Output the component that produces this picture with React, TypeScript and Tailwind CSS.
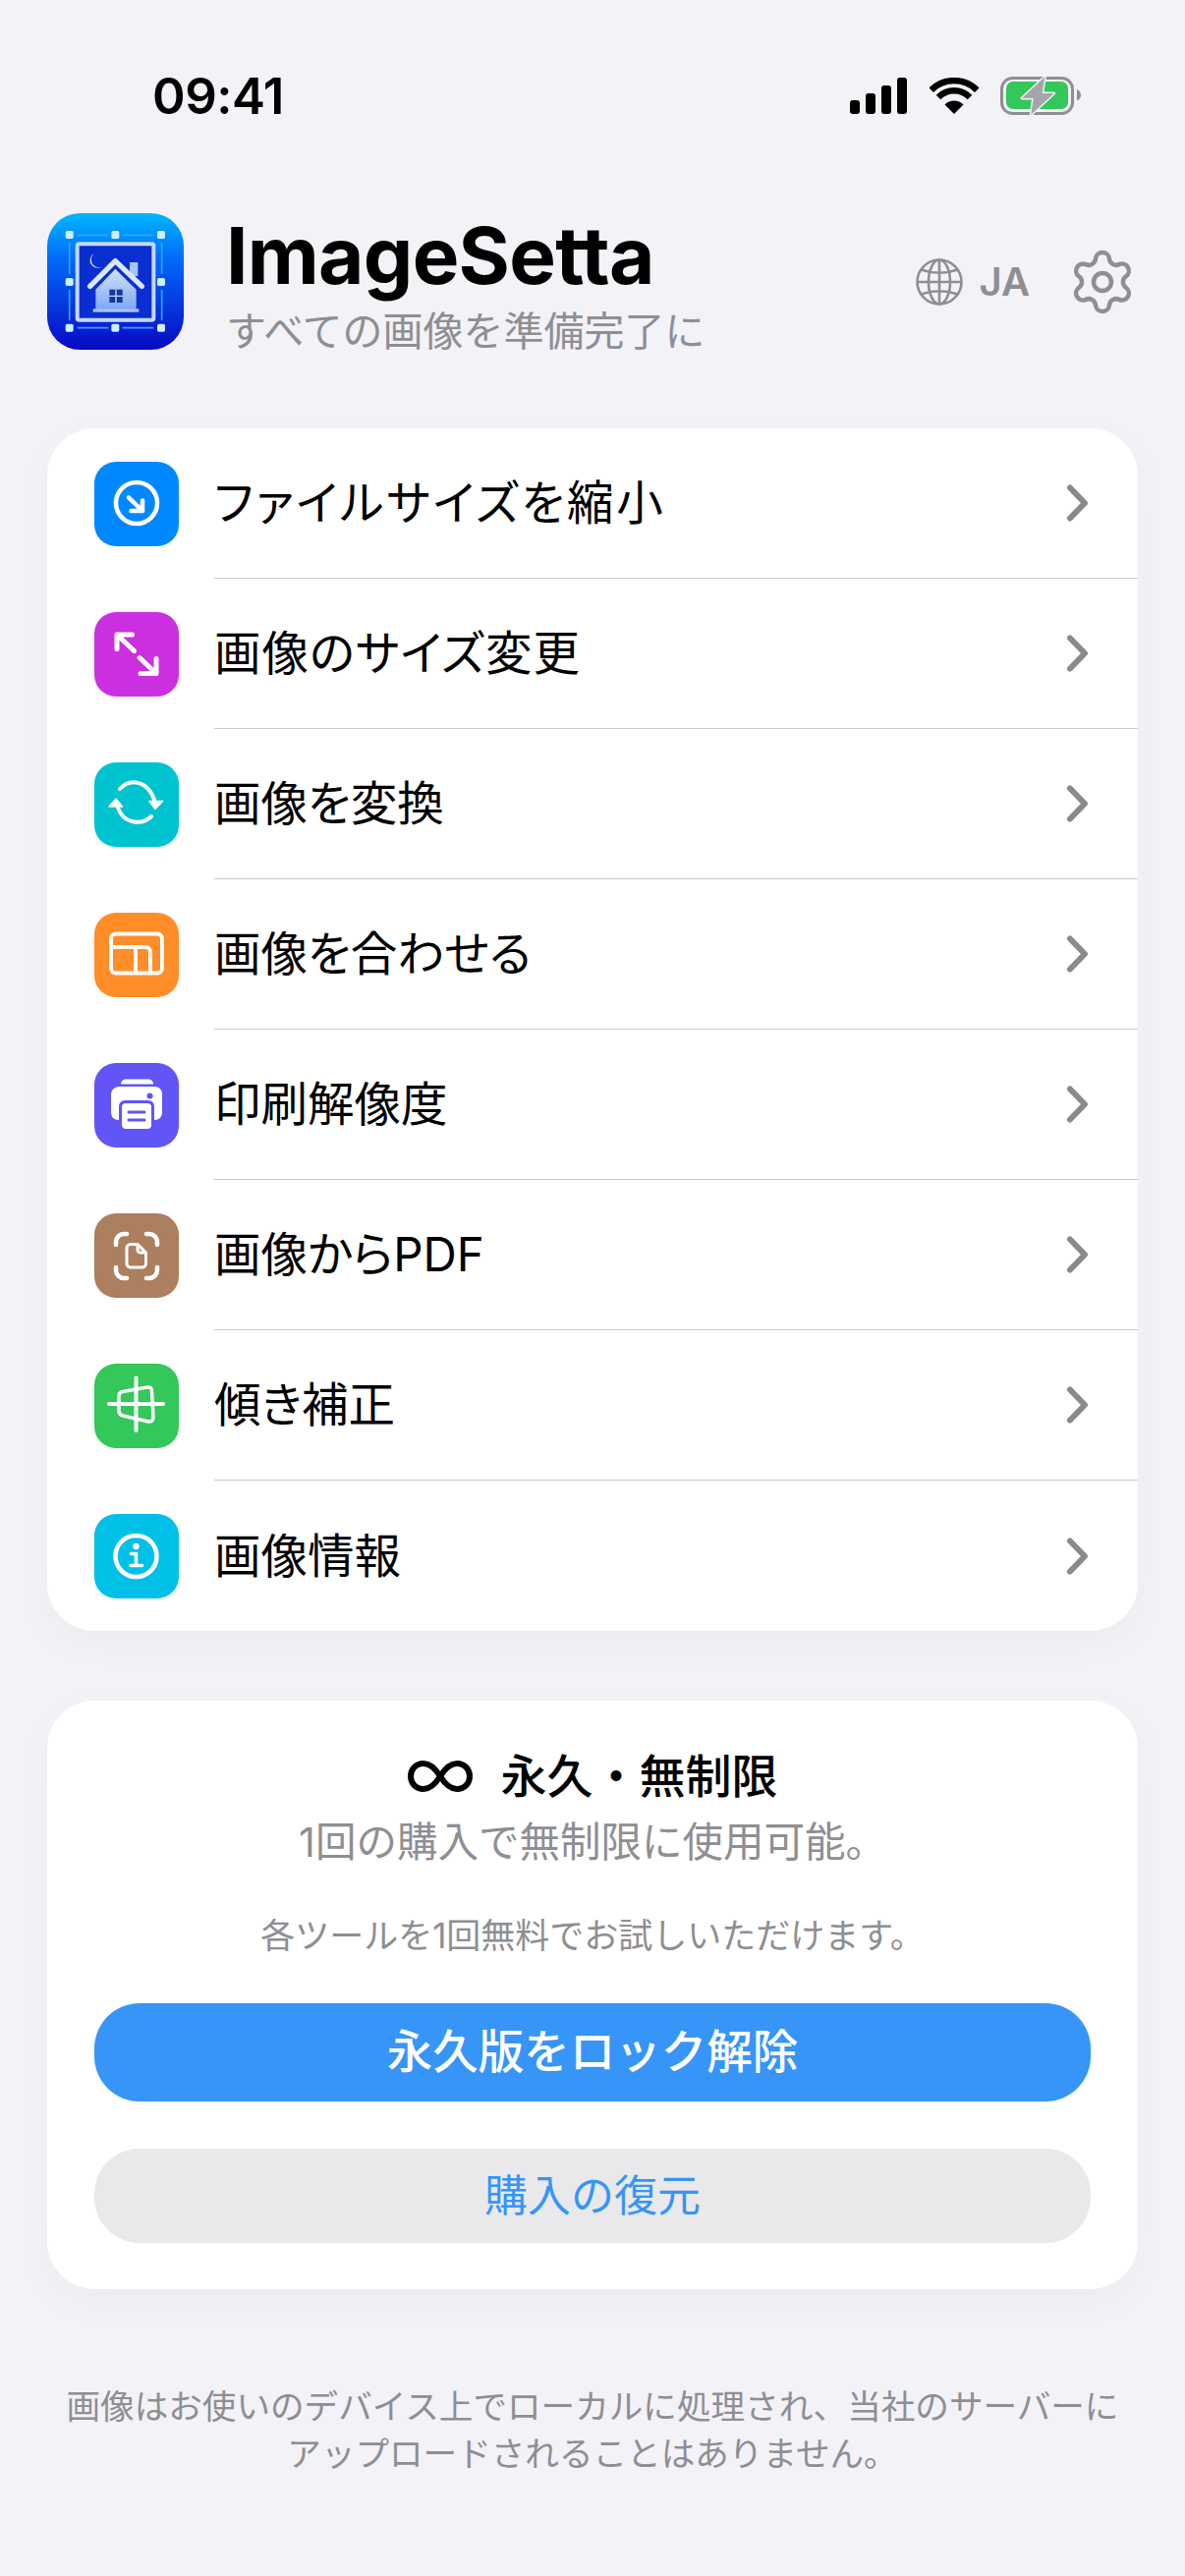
import type { ReactNode } from "react";
import { Settings } from "lucide-react";

function StatusIcons() {
  return (
    <div className="flex items-center">
      {/* signal */}
      <svg width="58" height="37" viewBox="0 0 58 37" fill="#000">
        <rect x="0" y="23" width="10" height="14" rx="3" />
        <rect x="16" y="16" width="10" height="21" rx="3" />
        <rect x="32" y="8" width="10" height="29" rx="3" />
        <rect x="48" y="0" width="10" height="37" rx="3" />
      </svg>
      {/* wifi */}
      <svg className="ml-[23px]" width="50" height="37" viewBox="0 0 50 37" fill="none" stroke="#000" strokeWidth="6.5">
        <path d="M1.7 12.7A33 33 0 0 1 48.3 12.7" />
        <path d="M9 20A22.6 22.6 0 0 1 41 20" />
        <path d="M25 37L15.5 27.5A13.4 13.4 0 0 1 34.5 27.5Z" fill="#000" stroke="none" />
      </svg>
      {/* battery */}
      <svg className="ml-[22px]" width="82" height="39" viewBox="0 0 82 39" fill="none">
        <rect x="1.5" y="1.5" width="72" height="36" rx="11" stroke="#8e8e93" strokeWidth="3" />
        <rect x="6" y="5" width="63" height="28" rx="7" fill="#34c759" />
        <path d="M78 13c2.500 1 4 3 4 5.800s-1.500 4.800-4 5.800z" fill="#8e8e93" />
        <path d="M45.300 0.300L22 22H33.700L31.300 38.700L54.700 17H42.700Z" fill="#a5a5aa" stroke="#f2f2f7" strokeWidth="3" strokeLinejoin="round" paintOrder="stroke" />
      </svg>
    </div>
  );
}

function AppIcon() {
  const xs = [123, 263, 403];
  const ys = [118, 262, 402];
  return (
    <svg className="shrink-0" width="139" height="139" viewBox="55 52 417 417">
      <defs>
        <linearGradient id="appBg" x1="0" y1="0" x2="0" y2="1">
          <stop offset="0" stopColor="#00b6ff" />
          <stop offset="0.35" stopColor="#0068f8" />
          <stop offset="1" stopColor="#0a08c4" />
        </linearGradient>
        <linearGradient id="appHouse" x1="0" y1="0" x2="0" y2="1">
          <stop offset="0" stopColor="#d2e2ff" />
          <stop offset="1" stopColor="#7fa8f2" />
        </linearGradient>
      </defs>
      <rect x="55" y="52" width="417" height="417" rx="100" fill="url(#appBg)" />
      <g stroke="#3aa0ff" strokeWidth="5">
        <path d="M147 119H242M285 119H380M147 402H242M285 402H380M123 142V238M123 286V380M405 142V238M405 286V380" />
      </g>
      {xs.flatMap((x) =>
        ys.map((y) =>
          x === 263 && y === 262 ? null : (
            <rect key={`${x}-${y}`} x={x - 12} y={y - 12} width="24" height="24" rx="5" fill="#cdeeff" />
          ),
        ),
      )}
      <rect x="147" y="146" width="233" height="232" rx="6" fill="#0a2ed2" stroke="#c2d8ff" strokeWidth="12" />
      <path d="M198 176A22 22 0 1 0 219 216A23 23 0 0 1 198 176Z" fill="#d4ecff" />
      <rect x="307" y="202" width="25" height="42" fill="#a9c6fb" />
      <path d="M203 285H327V345H203Z M263 222L327 285H203Z" fill="url(#appHouse)" />
      <rect x="195" y="344" width="140" height="10" fill="#a9c4f8" />
      <path d="M186 275L263 198L344 275" fill="none" stroke="#d8e6ff" strokeWidth="16" strokeLinecap="round" strokeLinejoin="round" />
      <rect x="245" y="285" width="40" height="40" fill="#10389e" />
      <path d="M265 285V325M245 305H285" stroke="#c8dcff" strokeWidth="4" />
    </svg>
  );
}

function IconBox({ color, children }: { color: string; children: ReactNode }) {
  return (
    <div className={`w-[86px] h-[86px] shrink-0 rounded-[22px] ${color}`}>
      <svg width="86" height="86" viewBox="0 0 86 86" fill="none" stroke="#fff" strokeLinecap="round" strokeLinejoin="round">
        {children}
      </svg>
    </div>
  );
}

const tools = [
  {
    label: "ファイルサイズを縮小",
    color: "bg-[#0088ff]",
    tracking: "tracking-[2.7px]",
    icon: (
      <g strokeWidth="4.500">
        <circle cx="43" cy="42" r="21" />
        <path d="M35 36.500L49 50M49 39.500V50H37.500" />
      </g>
    ),
  },
  {
    label: "画像のサイズ変更",
    color: "bg-[#cb30e0]",
    tracking: "tracking-[1px]",
    icon: (
      <g strokeWidth="5">
        <path d="M23 23L40.500 39.500M23 37.500V23H38.500" />
        <path d="M63 62.500L46 46.500M63 47.500V62.500H47" />
      </g>
    ),
  },
  {
    label: "画像を変換",
    color: "bg-[#00c3d0]",
    tracking: "",
    icon: (
      <g strokeWidth="4">
        <path d="M26 27C36 16 54 18 61 38" />
        <path d="M24 46C29 62 48 65 58 55" />
        <path d="M56 39.500H69.500L62 47.500Z M15 45H28.500L22 37Z" fill="#fff" strokeWidth="1.500" />
      </g>
    ),
  },
  {
    label: "画像を合わせる",
    color: "bg-[#ff8d28]",
    tracking: "",
    icon: (
      <g strokeWidth="4">
        <rect x="17" y="21.500" width="52" height="40" rx="5" />
        <path d="M17 35H52a5 5 0 0 1 5 5V61M42 35V61" />
      </g>
    ),
  },
  {
    label: "印刷解像度",
    color: "bg-[#6155f5]",
    tracking: "",
    icon: (
      <g stroke="none">
        <path d="M27 21.500c0-3 2-5 6-5h21c4 0 6 2 6 5z" fill="#fff" />
        <path d="M26 24h35c5 0 8 3 8 8v18c0 5-3 8-8 8h-3V41H28v17h-3c-5 0-8-3-8-8V32c0-5 4-8 9-8z" fill="#fff" />
        <rect x="25" y="38" width="36" height="32" rx="6" fill="#6155f5" />
        <rect x="28" y="41" width="30" height="26" rx="4" fill="#fff" />
        <path d="M35 50H51M35 58H51" stroke="#6155f5" strokeWidth="3" />
        <circle cx="56.500" cy="33.500" r="3" fill="#6155f5" />
      </g>
    ),
  },
  {
    label: "画像からPDF",
    color: "bg-[#ac7f5e]",
    tracking: "",
    icon: (
      <>
        <path
          strokeWidth="4.500"
          d="M22 32V29a8 8 0 0 1 8-8h3M53 21h3a8 8 0 0 1 8 8v3M64 55v3a8 8 0 0 1-8 8h-3M33 66h-3a8 8 0 0 1-8-8v-3"
        />
        <path
          strokeWidth="3"
          d="M37 31.500H44L52.500 40V51a4 4 0 0 1-4 4H37a4 4 0 0 1-4-4V35.500a4 4 0 0 1 4-4ZM44 31.500V37a3 3 0 0 0 3 3H52.500"
        />
      </>
    ),
  },
  {
    label: "傾き補正",
    color: "bg-[#34c759]",
    tracking: "",
    icon: (
      <>
        <path strokeWidth="4" d="M15 41H70M42.500 14.500V68" />
        <path strokeWidth="3.500" d="M29 28.500L54 24Q58.500 23.300 58.500 28L60 54Q60 59.500 55 59L29 53Q25 52 25 48V33Q25 29 29 28.500Z" />
      </>
    ),
  },
  {
    label: "画像情報",
    color: "bg-[#00c0e8]",
    tracking: "",
    icon: (
      <>
        <circle cx="42.500" cy="43" r="21" strokeWidth="4.500" />
        <circle cx="42.500" cy="33" r="3.200" fill="#fff" stroke="none" />
        <path strokeWidth="3.500" d="M37.500 40.500H42.500V52.500M37 52.500H48.500" />
      </>
    ),
  },
];

export default function App() {
  return (
    <div className="w-full min-h-[2622px] bg-[#f2f2f7] text-black font-['Inter','Noto_Sans_CJK_JP',sans-serif]">
      {/* Status bar */}
      <div className="h-[217px] pt-[78px] pl-[155px] pr-[106px] flex items-start justify-between">
        <span className="text-[51px] leading-[40px] font-semibold tracking-[-0.5px]">09:41</span>
        <StatusIcons />
      </div>

      {/* Header */}
      <div className="h-[139px] ml-[48px] mr-[48px] flex items-center">
        <AppIcon />
        <div className="ml-[43px] flex-1 min-w-0 mt-[5px]">
          <h1 className="text-[80px] leading-[88px] font-bold tracking-[-0.7px]">ImageSetta</h1>
          <p className="text-[41px] leading-[50px] text-[#8e8e93] mt-[8px]">すべての画像を準備完了に</p>
        </div>
        <svg width="48" height="48" viewBox="0 0 48 48" fill="none" stroke="#8e8e93" strokeWidth="2.600">
          <circle cx="24" cy="24" r="22.500" />
          <ellipse cx="24" cy="24" rx="11" ry="22.500" />
          <path d="M24 1.500V46.500M1.500 24H46.500M5.500 11.500Q24 18 42.500 11.500M5.500 36.500Q24 30 42.500 36.500" />
        </svg>
        <span className="ml-[16px] text-[40px] leading-[48px] font-semibold text-[#8e8e93]">JA</span>
        <Settings className="ml-[38px] text-[#8e8e93]" size={72} strokeWidth={1.500} />
      </div>

      {/* Tools */}
      <div className="mt-[80px] mx-[48px] bg-white rounded-[48px] shadow-[0_12px_40px_rgba(0,0,0,0.03)]">
        {tools.map((tool, i) => (
          <div key={tool.label} className="h-[153px] pl-[48px] flex items-center gap-[36px]">
            <IconBox color={tool.color}>{tool.icon}</IconBox>
            <div
              className={`flex-1 h-full pr-[48px] flex items-center justify-between ${
                i < tools.length - 1 ? "border-b-[1.5px] border-[#c9c9cc]" : ""
              }`}
            >
              <span className={`text-[47.5px] leading-[60px] [font-feature-settings:'palt'] ${tool.tracking}`}>{tool.label}</span>
              <svg width="24" height="40" viewBox="0 0 24 40" fill="none" stroke="#8a8a8e" strokeWidth="6" strokeLinecap="round" strokeLinejoin="round">
                <path d="M3 4.500L18 20L3 35.500" />
              </svg>
            </div>
          </div>
        ))}
      </div>

      {/* Purchase card */}
      <div className="mt-[71px] mx-[48px] px-[48px] pt-[47px] pb-[47px] bg-white rounded-[48px] flex flex-col items-center shadow-[0_12px_40px_rgba(0,0,0,0.03)]">
        <div className="h-[60px] flex items-center gap-[29px]">
          <svg width="66" height="32" viewBox="0 0 66 32" fill="none" stroke="#000" strokeWidth="6">
            <path d="M33 16C28 8 23 3 16 3C8 3 3 9 3 16C3 23 8 29 16 29C23 29 28 24 33 16C38 8 43 3 50 3C58 3 63 9 63 16C63 23 58 29 50 29C43 29 38 24 33 16Z" />
          </svg>
          <span className="text-[47px] leading-[60px] font-medium">永久・無制限</span>
        </div>
        <p className="mt-[12px] text-[41.5px] leading-[50px] text-[#8e8e93]">1回の購入で無制限に使用可能。</p>
        <p className="mt-[48px] text-[35px] leading-[44px] text-[#8e8e93]">各ツールを1回無料でお試しいただけます。</p>
        <button className="mt-[47px] w-full h-[100px] rounded-[46px] bg-[#3695f7] text-white text-[46.5px] font-medium">
          永久版をロック解除
        </button>
        <button className="mt-[48px] w-full h-[96px] rounded-[46px] bg-[#e9e9eb] text-[#3695f7] text-[44px]">
          購入の復元
        </button>
      </div>

      {/* Footer note */}
      <p className="mt-[95px] px-[48px] text-center text-[34.6px] leading-[48px] text-[#8e8e93]">
        画像はお使いのデバイス上でローカルに処理され、当社のサーバーに
        <br />
        アップロードされることはありません。
      </p>
    </div>
  );
}
